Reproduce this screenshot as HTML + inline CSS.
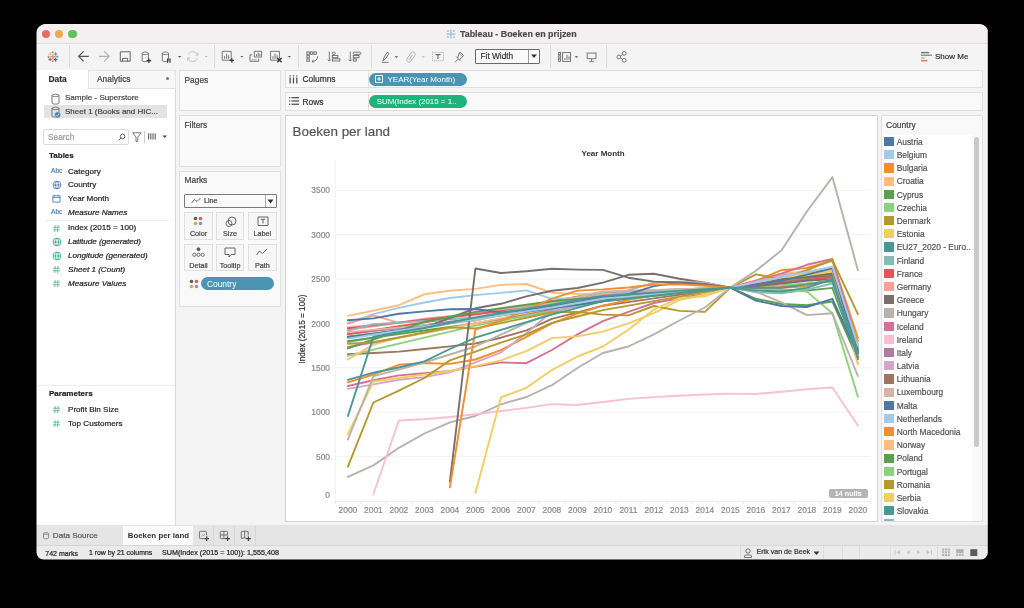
<!DOCTYPE html>
<html><head><meta charset="utf-8">
<style>
*{box-sizing:border-box;margin:0;padding:0}
html,body{width:1024px;height:608px;overflow:hidden;background:#000}
body{position:relative;font-family:"Liberation Sans",sans-serif;color:#333}
.a{position:absolute}
#win{position:absolute;left:36px;top:24px;width:953px;height:536px;border-radius:10px;overflow:hidden;background:#f4f4f4}
.t{position:absolute;white-space:nowrap;line-height:1}
.box{position:absolute;background:#f9f9f9;border:1px solid #e0e0e0}
.sw{position:absolute;left:884px;width:9.5px;height:9.3px}
.lt{position:absolute;left:896.7px;font-size:8.4px;color:#555;white-space:nowrap;line-height:12px}
.yl{position:absolute;left:296px;width:34px;text-align:right;font-size:8.4px;color:#8a8a8a;line-height:11px}
.xl{position:absolute;top:504.5px;width:30px;text-align:center;font-size:8.4px;color:#8a8a8a;line-height:11px}
.fld{position:absolute;left:68px;font-size:8.1px;color:#222;white-space:nowrap;line-height:12px}
.fi{position:absolute;left:51px}
svg{position:absolute;overflow:visible}
#root{position:absolute;left:0;top:0;width:1024px;height:608px;will-change:transform}
.t,.lt,.fld,.yl,.xl{-webkit-text-stroke:0.2px currentColor}
</style></head><body><div id="root">
<div id="win">
  <!-- title bar -->
  <div class="a" style="left:0;top:0;width:953px;height:20px;background:#f4f0f1;border-bottom:1px solid #e0dddf"></div>
</div>
<!-- traffic lights -->
<div class="a" style="left:42px;top:30px;width:8.4px;height:8.4px;border-radius:50%;background:#ec6b5f"></div>
<div class="a" style="left:55.1px;top:30px;width:8.4px;height:8.4px;border-radius:50%;background:#f3a64c"></div>
<div class="a" style="left:68.3px;top:30px;width:8.4px;height:8.4px;border-radius:50%;background:#5fc454"></div>
<!-- title -->
<svg style="left:446px;top:29px" width="10" height="10" viewBox="0 0 10 10"><g fill="#9cc3e0"><rect x="4.3" y="0.5" width="1.4" height="9"/><rect x="0.5" y="4.3" width="9" height="1.4"/><circle cx="2" cy="2" r="1"/><circle cx="8" cy="2" r="1"/><circle cx="2" cy="8" r="1"/><circle cx="8" cy="8" r="1"/></g></svg>
<div class="t" style="left:460px;top:29.8px;font-size:8.9px;font-weight:bold;color:#4b4b4b">Tableau - Boeken en prijzen</div>

<!-- toolbar icons -->
<svg style="left:0;top:0" width="1024" height="608"><g fill="none"><path d="M50.30 56.80H55.50M52.90 54.20V59.40" stroke="#f0954a" stroke-width="1.40"/><path d="M48.40 54.00H51.60M50.00 52.40V55.60" stroke="#f7b27a" stroke-width="1.20"/><path d="M51.60 52.40H53.80M52.70 51.30V53.50" stroke="#5aa89a" stroke-width="0.90"/><path d="M53.90 54.00H57.30M55.60 52.30V55.70" stroke="#5b8fc4" stroke-width="1.00"/><path d="M47.50 56.90H49.70M48.60 55.80V58.00" stroke="#5aa89a" stroke-width="0.90"/><path d="M56.10 56.70H58.50M57.30 55.50V57.90" stroke="#6b96c8" stroke-width="0.90"/><path d="M48.40 59.40H51.80M50.10 57.70V61.10" stroke="#e05060" stroke-width="1.20"/><path d="M51.60 61.10H53.80M52.70 60.00V62.20" stroke="#7aa2d0" stroke-width="0.90"/><path d="M53.80 59.60H57.40M55.60 57.80V61.40" stroke="#3a6aa8" stroke-width="1.20"/></g></svg>
<div class="a" style="left:68.5px;top:45.3px;width:1px;height:23px;background:#dcdcdc"></div>
<svg style="left:0;top:0" width="1024" height="608"><g fill="none" stroke="#6a6a6a" stroke-width="0.9">
 <path d="M78.8 56.3H88.8M83.6 51.3L78.6 56.3L83.6 61.3" stroke="#555" stroke-width="1.2"/>
 <path d="M99 56.3H109M104.2 51.3L109.2 56.3L104.2 61.3" stroke="#b0b0b0" stroke-width="1.2"/>
 <path d="M120.3 51.8H130.2V61.2H120.3Z M122.6 61.2V58.4H127.6V61.2" stroke="#555"/>
 <path d="M142.2 53.4C142.2 51.6 148.4 51.6 148.4 53.4V60.6C148.4 62 142.2 62 142.2 60.6Z M142.2 53.4C142.2 55 148.4 55 148.4 53.4"/>
 <path d="M146.6 60.6H151.2M148.9 58.4V62.9" stroke="#333" stroke-width="1.2"/>
 <path d="M162.3 53.4C162.3 51.6 168.5 51.6 168.5 53.4V60.6C168.5 62 162.3 62 162.3 60.6Z M162.3 53.4C162.3 55 168.5 55 168.5 53.4"/>
 <path d="M167.6 58.5V62.8M170 58.5V62.8" stroke="#333" stroke-width="1.2"/>
 <path d="M178 56L179.7 57.8L181.4 56Z" fill="#555" stroke="none"/>
 <path d="M188 54.5A5.3 5.3 0 0 1 197.6 54.8M197.6 58.5A5.3 5.3 0 0 1 187.8 58.3 M197.9 52.6V55.2H195.3 M187.5 60.5V58H190.1" stroke="#bdbdbd"/>
 <path d="M204.8 56L206.3 57.6L207.8 56Z" fill="#bbb" stroke="none"/>
</g></svg>
<div class="a" style="left:214px;top:45.3px;width:1px;height:23px;background:#dcdcdc"></div>
<svg style="left:0;top:0" width="1024" height="608"><g fill="none" stroke="#6a6a6a" stroke-width="0.9">
 <path d="M222.2 51.3H231.2V60.2H222.2Z M224.6 58.8V56.2M226.6 58.8V53.6M228.6 58.8V55.2"/>
 <path d="M229.6 60.4H234M231.8 58.2V62.6" stroke="#333" stroke-width="1.3"/>
 <path d="M240.4 56L241.9 57.6L243.4 56Z" fill="#555" stroke="none"/>
 <path d="M254.3 51.3H261.6V57H254.3Z M256.5 56V54.2M258.2 56V52.6M259.9 56V53.8"/>
 <path d="M252.2 54.9H250V61.3H258.7V58.5" />
 <path d="M251.8 59.8H256.8" stroke-dasharray="1 0.8"/>
 <path d="M270.6 51.3H279.4V60.2H270.6Z M273 58.8V56.2M275 58.8V53.6M277 58.8V55.2"/>
 <path d="M277.3 58L281.6 62.3M281.6 58L277.3 62.3" stroke="#333" stroke-width="1.3"/>
 <path d="M287.7 56L289.4 57.6L291.1 56Z" fill="#555" stroke="none"/>
</g></svg>
<div class="a" style="left:298.0px;top:45.3px;width:1px;height:23px;background:#dcdcdc"></div>
<svg style="left:0;top:0" width="1024" height="608"><g fill="none" stroke="#6a6a6a" stroke-width="0.9">
 <rect x="306.9" y="51.9" width="2.4" height="2.4"/><rect x="310.4" y="51.9" width="2.4" height="2.4"/><rect x="313.9" y="51.9" width="2.4" height="2.4"/>
 <rect x="306.9" y="55.4" width="2.4" height="2.4"/><rect x="306.9" y="58.9" width="2.4" height="2.4"/>
 <path d="M317.6 56.3C317.6 59.5 315.5 61.2 312.2 61.4"/><path d="M313.6 60.2L311.9 61.4L313.6 62.6"/>
 <path d="M329.3 51.6V61M327.9 59.6L329.3 61.2L330.7 59.6"/>
 <rect x="332.3" y="52.2" width="3" height="2.2" rx="1"/><rect x="332.3" y="55.5" width="5.6" height="2.2"/><rect x="332.3" y="58.8" width="7.6" height="2.2"/>
 <path d="M350.3 51.6V61M348.9 59.6L350.3 61.2L351.7 59.6"/>
 <rect x="353.3" y="52.2" width="7.6" height="2.2" rx="1"/><rect x="353.3" y="55.5" width="5.6" height="2.2"/><rect x="353.3" y="58.8" width="3" height="2.2"/>
</g></svg>
<div class="a" style="left:370.5px;top:45.3px;width:1px;height:23px;background:#dcdcdc"></div>
<svg style="left:0;top:0" width="1024" height="608"><g fill="none" stroke="#6a6a6a" stroke-width="0.9">
 <path d="M382.8 61L384.2 57.3L387.2 52.2L388.9 53.3L385.9 58.4L382.8 61Z M381.8 62.4H388.6"/>
 <path d="M394.5 56.3L396.3 58.1L398.1 56.3Z" fill="#555" stroke="none"/>
 <g transform="rotate(35 411 57)" stroke="#b0b0b0"><rect x="408.7" y="51.3" width="4.6" height="11.4" rx="2.3"/><path d="M411 54.2V60.5"/></g>
 <path d="M421.3 56.3L423.1 58.1L424.9 56.3Z" fill="#bbb" stroke="none"/>
 <rect x="432.5" y="52.4" width="11" height="8.2" stroke="#9a9a9a" stroke-dasharray="0.9 1.1"/>
 <path d="M435.6 54.6H440.4M438 54.6V59" stroke="#6a6a6a" stroke-width="1.1"/>
 <path d="M455 62.3L458 59.2 M456.2 56.6L460.6 61 M457.6 58L459.2 53 L462.8 56.6 L459.6 59.4 M459.2 53L460.2 52.2 L463.6 55.6L462.8 56.6"/>
</g></svg>
<div class="a" style="left:475px;top:49px;width:65px;height:15px;border:1px solid #6a6a6a;background:#fafafa;border-radius:1px"></div>
<div class="a" style="left:527.5px;top:50px;width:1px;height:13px;background:#9a9a9a"></div>
<div class="t" style="left:480.5px;top:52.3px;font-size:8.3px;color:#333">Fit Width</div>
<svg style="left:530px;top:53px" width="8" height="6"><path d="M1 1.5H7L4 5Z" fill="#333"/></svg>
<div class="a" style="left:549.5px;top:45.3px;width:1px;height:23px;background:#dcdcdc"></div>
<svg style="left:0;top:0" width="1024" height="608"><g fill="none" stroke="#6a6a6a" stroke-width="0.9">
 <rect x="558.6" y="52.6" width="2" height="2.2"/><rect x="558.6" y="55.8" width="2" height="2.2"/><rect x="558.6" y="59" width="2" height="2.2"/>
 <rect x="562.6" y="52.6" width="8" height="8.8"/><path d="M564.9 60V58M567 60V55M569 60V56.5"/>
 <path d="M586.2 53.1H597M587.2 53.6V58.7H596V53.6M591.6 58.7V61.6M589.2 61.7H594"/>
 <circle cx="618.9" cy="57" r="1.9"/><circle cx="624.2" cy="53.4" r="1.9"/><circle cx="624.2" cy="60.3" r="1.9"/><path d="M620.6 56L622.5 54.5M620.6 58L622.5 59.3"/>
</g><path d="M574.6 56.3L576.4 58.1L578.2 56.3Z" fill="#555"/></svg>
<div class="a" style="left:606.0px;top:45.3px;width:1px;height:23px;background:#dcdcdc"></div>

<!-- show me -->
<svg style="left:921px;top:51px" width="13" height="12" viewBox="0 0 13 12"><rect x="0" y="0.9" width="8.2" height="1.5" fill="#7a7a7a"/><rect x="0" y="3.5" width="11" height="1.5" fill="#6b9bd1"/><rect x="0" y="6.3" width="4" height="1.5" fill="#f2b36e"/><rect x="0" y="8.9" width="6.5" height="1.5" fill="#e8737a"/></svg>
<div class="t" style="left:935px;top:52.8px;font-size:8.0px;color:#333">Show Me</div>

<!-- LEFT PANEL -->
<div class="a" style="left:36px;top:70px;width:140px;height:455px;background:#fff;border-right:1px solid #d9d9d9"></div>
<div class="a" style="left:88px;top:70.3px;width:88px;height:19px;background:#f7f7f7;border:1px solid #e3e3e3"></div>
<div class="t" style="left:48.5px;top:74.5px;font-size:8.4px;font-weight:bold;color:#333">Data</div>
<div class="t" style="left:97px;top:74.5px;font-size:8.4px;color:#444">Analytics</div>
<div class="a" style="left:166px;top:77px;width:3px;height:3px;border-radius:50%;background:#777"></div>
<svg style="left:51px;top:92.5px" width="9" height="12" viewBox="0 0 9 12" fill="none" stroke="#666" stroke-width="0.9"><path d="M1 2.5C1 0.8 8 0.8 8 2.5V10C8 11.5 1 11.5 1 10Z M1 2.5C1 4 8 4 8 2.5"/></svg>
<div class="t" style="left:65px;top:93.5px;font-size:8.05px;color:#444">Sample - Superstore</div>
<div class="a" style="left:44px;top:105px;width:123.4px;height:13px;background:#e3e3e3"></div>
<svg style="left:51px;top:105.5px" width="11" height="13" viewBox="0 0 11 13" fill="none" stroke="#666" stroke-width="0.9"><path d="M1 2.5C1 0.8 8 0.8 8 2.5V10C8 11.5 1 11.5 1 10Z M1 2.5C1 4 8 4 8 2.5"/><circle cx="6.6" cy="8.9" r="3.1" fill="#3a86c4" stroke="#e3e3e3" stroke-width="0.6"/><path d="M5.2 9L6.3 10.1L8.2 7.8" stroke="#fff" stroke-width="0.7"/></svg>
<div class="t" style="left:65px;top:107.9px;font-size:8.0px;color:#444">Sheet 1 (Books and HIC...</div>

<div class="a" style="left:42.5px;top:129.2px;width:86.5px;height:15.5px;border:1px solid #dcdcdc;background:#fff;border-radius:2px"></div>
<div class="t" style="left:48px;top:133px;font-size:8.3px;color:#9a9a9a">Search</div>
<svg style="left:118px;top:133px" width="8" height="8" viewBox="0 0 8 8" fill="none" stroke="#555" stroke-width="0.9"><circle cx="4.6" cy="3.4" r="2.3"/><path d="M3 5L0.8 7.2"/></svg>
<svg style="left:131.5px;top:131.5px" width="10" height="10" viewBox="0 0 10 10" fill="none" stroke="#555" stroke-width="0.8"><path d="M0.6 0.8H9.2L5.8 5V9.4H4V5Z"/></svg>
<div class="a" style="left:143.5px;top:131px;width:1px;height:12px;background:#ccc"></div>
<svg style="left:147.7px;top:133px" width="20" height="9" viewBox="0 0 20 9"><g fill="#707070"><rect x="0" y="0.3" width="1.2" height="6.2"/><rect x="2.2" y="0.3" width="1.2" height="6.2"/><rect x="4.4" y="0.3" width="1.2" height="6.2"/><rect x="6.6" y="0.3" width="1.2" height="6.2"/><path d="M14.5 2.6H19L16.75 5Z" fill="#444"/></g></svg>

<div class="t" style="left:49px;top:152.3px;font-size:8.0px;font-weight:bold;color:#222">Tables</div>
<!-- field icons -->
<div class="t" style="left:51px;top:167.8px;font-size:6.6px;color:#4f81b3">Abc</div>
<svg style="left:51.5px;top:180px" width="10" height="10" viewBox="0 0 10 10" fill="none" stroke="#4f81b3" stroke-width="0.9"><circle cx="5" cy="5" r="3.9"/><path d="M1.1 5H8.9M5 1.1C3 3 3 7 5 8.9M5 1.1C7 3 7 7 5 8.9"/></svg>
<svg style="left:52px;top:194px" width="9" height="9" viewBox="0 0 10 10" fill="none" stroke="#4f81b3" stroke-width="1"><path d="M1 2H9V9H1Z M1 4H9M3 0.8V2.5M7 0.8V2.5"/></svg>
<div class="t" style="left:51px;top:209px;font-size:6.6px;color:#4f81b3">Abc</div>
<div class="a" style="left:45px;top:220px;width:124px;height:1px;background:#ececec"></div>
<svg style="left:52px;top:223.5px" width="9" height="9" viewBox="0 0 9 9" fill="none" stroke="#52b596" stroke-width="0.8"><path d="M3.2 1L2.8 8M6 1L5.6 8M1 3.2H8M1 5.8H8"/></svg>
<svg style="left:51.5px;top:236.5px" width="10" height="10" viewBox="0 0 10 10" fill="none" stroke="#3fae8a" stroke-width="0.9"><circle cx="5" cy="5" r="3.9"/><path d="M1.1 5H8.9M5 1.1C3 3 3 7 5 8.9M5 1.1C7 3 7 7 5 8.9"/></svg>
<svg style="left:51.5px;top:250.5px" width="10" height="10" viewBox="0 0 10 10" fill="none" stroke="#3fae8a" stroke-width="0.9"><circle cx="5" cy="5" r="3.9"/><path d="M1.1 5H8.9M5 1.1C3 3 3 7 5 8.9M5 1.1C7 3 7 7 5 8.9"/></svg>
<svg style="left:52px;top:264.5px" width="9" height="9" viewBox="0 0 9 9" fill="none" stroke="#52b596" stroke-width="0.8"><path d="M3.2 1L2.8 8M6 1L5.6 8M1 3.2H8M1 5.8H8"/></svg>
<svg style="left:52px;top:278.5px" width="9" height="9" viewBox="0 0 9 9" fill="none" stroke="#52b596" stroke-width="0.8"><path d="M3.2 1L2.8 8M6 1L5.6 8M1 3.2H8M1 5.8H8"/></svg>
<div class="fld" style="top:165.7px">Category</div>
<div class="fld" style="top:179.3px">Country</div>
<div class="fld" style="top:193.1px">Year Month</div>
<div class="fld" style="top:206.9px;font-style:italic">Measure Names</div>
<div class="fld" style="top:222.1px">Index (2015 = 100)</div>
<div class="fld" style="top:236.0px;font-style:italic">Latitude (generated)</div>
<div class="fld" style="top:250.0px;font-style:italic">Longitude (generated)</div>
<div class="fld" style="top:263.6px;font-style:italic">Sheet 1 (Count)</div>
<div class="fld" style="top:277.7px;font-style:italic">Measure Values</div>

<div class="a" style="left:37px;top:385px;width:138px;height:1px;background:#ececec"></div>
<div class="t" style="left:49px;top:390.3px;font-size:8.0px;font-weight:bold;color:#222">Parameters</div>
<svg style="left:52px;top:404.5px" width="9" height="9" viewBox="0 0 9 9" fill="none" stroke="#52b596" stroke-width="0.8"><path d="M3.2 1L2.8 8M6 1L5.6 8M1 3.2H8M1 5.8H8"/></svg>
<svg style="left:52px;top:418.5px" width="9" height="9" viewBox="0 0 9 9" fill="none" stroke="#52b596" stroke-width="0.8"><path d="M3.2 1L2.8 8M6 1L5.6 8M1 3.2H8M1 5.8H8"/></svg>
<div class="fld" style="top:403.5px">Profit Bin Size</div>
<div class="fld" style="top:417.7px">Top Customers</div>

<!-- MIDDLE COLUMN -->
<div class="box" style="left:179px;top:70px;width:102px;height:41px"></div>
<div class="t" style="left:184.5px;top:76px;font-size:8.4px;color:#444">Pages</div>
<div class="box" style="left:179px;top:115px;width:102px;height:51.5px"></div>
<div class="t" style="left:184.5px;top:120.5px;font-size:8.4px;color:#444">Filters</div>
<div class="box" style="left:179px;top:170.5px;width:102px;height:136px"></div>
<div class="t" style="left:184.5px;top:176px;font-size:8.4px;color:#444">Marks</div>
<div class="a" style="left:184px;top:194.2px;width:92.6px;height:13.8px;border:1px solid #7a7a7a;background:#fafafa;border-radius:1px"></div>
<div class="a" style="left:264.5px;top:195px;width:1px;height:12px;background:#aaa"></div>
<svg style="left:191px;top:197px" width="10" height="7" viewBox="0 0 10 7" fill="none" stroke="#555" stroke-width="0.9"><path d="M0.5 6L3.5 2.5L6 4.5L9.5 1"/></svg>
<div class="t" style="left:204px;top:197.3px;font-size:7.2px;color:#444">Line</div>
<svg style="left:267px;top:199px" width="7" height="5"><path d="M0.5 0.5H6.5L3.5 4.5Z" fill="#333"/></svg>
<!-- mark buttons -->
<div class="a" style="left:184px;top:212px;width:28.5px;height:27.5px;border:1px solid #e0e0e0;background:#f7f7f7"></div>
<div class="a" style="left:216.3px;top:212px;width:27.5px;height:27.5px;border:1px solid #e0e0e0;background:#f7f7f7"></div>
<div class="a" style="left:248px;top:212px;width:28.6px;height:27.5px;border:1px solid #e0e0e0;background:#f7f7f7"></div>
<div class="a" style="left:184px;top:243.7px;width:28.5px;height:27.5px;border:1px solid #e0e0e0;background:#f7f7f7"></div>
<div class="a" style="left:216.3px;top:243.7px;width:27.5px;height:27.5px;border:1px solid #e0e0e0;background:#f7f7f7"></div>
<div class="a" style="left:248px;top:243.7px;width:28.6px;height:27.5px;border:1px solid #e0e0e0;background:#f7f7f7"></div>
<svg style="left:193px;top:216px" width="10" height="10" viewBox="0 0 10 10"><circle cx="2.5" cy="2.5" r="1.8" fill="#5f5f5f"/><circle cx="7.5" cy="2.5" r="1.8" fill="#e05c5c"/><circle cx="2.5" cy="7.5" r="1.8" fill="#f29d4b"/><circle cx="7.5" cy="7.5" r="1.8" fill="#6f9fd8"/></svg>
<div class="t" style="left:184.5px;width:28px;text-align:center;top:229.5px;font-size:7.2px;color:#444">Color</div>
<svg style="left:224.5px;top:215.5px" width="12" height="12" viewBox="0 0 12 12" fill="none" stroke="#555" stroke-width="0.9"><circle cx="4" cy="7.5" r="3"/><circle cx="7" cy="5" r="4"/></svg>
<div class="t" style="left:216.3px;width:27.5px;text-align:center;top:229.5px;font-size:7.2px;color:#444">Size</div>
<svg style="left:256.5px;top:215.5px" width="12" height="11" viewBox="0 0 12 11" fill="none" stroke="#555" stroke-width="0.9"><path d="M1 1H11V9.5H1Z M3.8 3.3H8.2M6 3.3V7.5"/></svg>
<div class="t" style="left:248px;width:28.6px;text-align:center;top:229.5px;font-size:7.2px;color:#444">Label</div>
<svg style="left:192px;top:247px" width="13" height="11" viewBox="0 0 13 11" fill="none" stroke="#555" stroke-width="0.8"><circle cx="6.5" cy="2.2" r="1.5" fill="#555"/><circle cx="2.3" cy="7.8" r="1.6"/><circle cx="6.5" cy="7.8" r="1.6"/><circle cx="10.7" cy="7.8" r="1.6"/></svg>
<div class="t" style="left:184.5px;width:28px;text-align:center;top:261.8px;font-size:7.2px;color:#444">Detail</div>
<svg style="left:224px;top:247px" width="12" height="11" viewBox="0 0 12 11" fill="none" stroke="#555" stroke-width="0.9"><path d="M1 1H11V7.5H7L5 10V7.5H1Z"/></svg>
<div class="t" style="left:216.3px;width:27.5px;text-align:center;top:261.8px;font-size:7.2px;color:#444">Tooltip</div>
<svg style="left:256px;top:248px" width="12" height="8" viewBox="0 0 12 8" fill="none" stroke="#555" stroke-width="0.9"><path d="M0.5 7L3.5 3L6.5 5.5L11 1"/></svg>
<div class="t" style="left:248px;width:28.6px;text-align:center;top:261.8px;font-size:7.2px;color:#444">Path</div>
<svg style="left:188.5px;top:278.5px" width="10" height="10" viewBox="0 0 10 10"><circle cx="2.5" cy="2.5" r="1.8" fill="#5f5f5f"/><circle cx="7.5" cy="2.5" r="1.8" fill="#e05c5c"/><circle cx="2.5" cy="7.5" r="1.8" fill="#f29d4b"/><circle cx="7.5" cy="7.5" r="1.8" fill="#6f9fd8"/></svg>
<div class="a" style="left:200.8px;top:277px;width:73.2px;height:13.3px;border-radius:7px;background:#4b95b3"></div>
<div class="t" style="left:207px;top:279.5px;font-size:8.4px;color:#fff;-webkit-text-stroke:0">Country</div>

<!-- SHELVES -->
<div class="box" style="left:285px;top:70px;width:698px;height:18.3px"></div>
<div class="a" style="left:367.5px;top:71px;width:1px;height:16.3px;background:#e0e0e0"></div>
<svg style="left:289px;top:74.5px" width="9" height="9" viewBox="0 0 9 9" fill="#555"><rect x="0.5" y="2.5" width="1.3" height="6"/><rect x="3.8" y="2.5" width="1.3" height="6"/><rect x="7.1" y="2.5" width="1.3" height="6"/><rect x="0.5" y="0.3" width="1.3" height="1.2"/><rect x="3.8" y="0.3" width="1.3" height="1.2"/><rect x="7.1" y="0.3" width="1.3" height="1.2"/></svg>
<div class="t" style="left:302.5px;top:75px;font-size:8.4px;color:#333">Columns</div>
<div class="a" style="left:369px;top:72.5px;width:98px;height:13.3px;border-radius:7px;background:#4b95b3"></div>
<svg style="left:375px;top:75px" width="8" height="8" viewBox="0 0 8 8" fill="none" stroke="#fff" stroke-width="0.9"><path d="M0.5 0.5H7.5V7.5H0.5Z M2 4H6M4 2V6" stroke-width="0.9"/></svg>
<div class="t" style="left:387.5px;top:75.6px;font-size:8.0px;color:#fff;-webkit-text-stroke:0">YEAR(Year Month)</div>
<div class="box" style="left:285px;top:92.3px;width:698px;height:18.3px"></div>
<div class="a" style="left:367.5px;top:93.3px;width:1px;height:16.3px;background:#e0e0e0"></div>
<svg style="left:289px;top:97px" width="10" height="8" viewBox="0 0 10 8" fill="#555"><rect x="0" y="0" width="1.3" height="1.3"/><rect x="2.5" y="0" width="7.5" height="1.3"/><rect x="0" y="3.3" width="1.3" height="1.3"/><rect x="2.5" y="3.3" width="7.5" height="1.3"/><rect x="0" y="6.6" width="1.3" height="1.3"/><rect x="2.5" y="6.6" width="7.5" height="1.3"/></svg>
<div class="t" style="left:302.5px;top:97.5px;font-size:8.4px;color:#333">Rows</div>
<div class="a" style="left:369px;top:94.8px;width:98px;height:13.6px;border-radius:7px;background:#1db37c"></div>
<div class="t" style="left:376.8px;top:97.8px;font-size:7.9px;color:#fff;-webkit-text-stroke:0">SUM(Index (2015 = 1..</div>

<!-- CHART PANE -->
<div class="a" style="left:285px;top:115px;width:593px;height:406.5px;background:#fff;border:1px solid #d3d3d3"></div>
<div class="t" style="left:292.5px;top:125px;font-size:13.4px;color:#555">Boeken per land</div>
<div class="t" style="left:581.5px;top:149.8px;font-size:8px;font-weight:bold;color:#333;-webkit-text-stroke:0">Year Month</div>
<div class="t" style="left:302.7px;top:329.4px;font-size:8.2px;color:#333;transform:translate(-50%,-50%) rotate(-90deg);transform-origin:center">Index (2015 = 100)</div>
<svg style="left:0;top:0" width="1024" height="608">
 <line x1="336" y1="456.6" x2="871" y2="456.6" stroke="#f3f3f3" stroke-width="1"/>
<line x1="336" y1="412.2" x2="871" y2="412.2" stroke="#f3f3f3" stroke-width="1"/>
<line x1="336" y1="367.8" x2="871" y2="367.8" stroke="#f3f3f3" stroke-width="1"/>
<line x1="336" y1="323.4" x2="871" y2="323.4" stroke="#f3f3f3" stroke-width="1"/>
<line x1="336" y1="279.1" x2="871" y2="279.1" stroke="#f3f3f3" stroke-width="1"/>
<line x1="336" y1="234.7" x2="871" y2="234.7" stroke="#f3f3f3" stroke-width="1"/>
<line x1="336" y1="190.3" x2="871" y2="190.3" stroke="#f3f3f3" stroke-width="1"/>
<line x1="335.3" y1="501" x2="335.3" y2="504" stroke="#e6e6e6" stroke-width="1"/>
<line x1="360.8" y1="501" x2="360.8" y2="504" stroke="#e6e6e6" stroke-width="1"/>
<line x1="386.3" y1="501" x2="386.3" y2="504" stroke="#e6e6e6" stroke-width="1"/>
<line x1="411.8" y1="501" x2="411.8" y2="504" stroke="#e6e6e6" stroke-width="1"/>
<line x1="437.3" y1="501" x2="437.3" y2="504" stroke="#e6e6e6" stroke-width="1"/>
<line x1="462.8" y1="501" x2="462.8" y2="504" stroke="#e6e6e6" stroke-width="1"/>
<line x1="488.3" y1="501" x2="488.3" y2="504" stroke="#e6e6e6" stroke-width="1"/>
<line x1="513.8" y1="501" x2="513.8" y2="504" stroke="#e6e6e6" stroke-width="1"/>
<line x1="539.3" y1="501" x2="539.3" y2="504" stroke="#e6e6e6" stroke-width="1"/>
<line x1="564.8" y1="501" x2="564.8" y2="504" stroke="#e6e6e6" stroke-width="1"/>
<line x1="590.3" y1="501" x2="590.3" y2="504" stroke="#e6e6e6" stroke-width="1"/>
<line x1="615.8" y1="501" x2="615.8" y2="504" stroke="#e6e6e6" stroke-width="1"/>
<line x1="641.3" y1="501" x2="641.3" y2="504" stroke="#e6e6e6" stroke-width="1"/>
<line x1="666.8" y1="501" x2="666.8" y2="504" stroke="#e6e6e6" stroke-width="1"/>
<line x1="692.3" y1="501" x2="692.3" y2="504" stroke="#e6e6e6" stroke-width="1"/>
<line x1="717.8" y1="501" x2="717.8" y2="504" stroke="#e6e6e6" stroke-width="1"/>
<line x1="743.3" y1="501" x2="743.3" y2="504" stroke="#e6e6e6" stroke-width="1"/>
<line x1="768.8" y1="501" x2="768.8" y2="504" stroke="#e6e6e6" stroke-width="1"/>
<line x1="794.3" y1="501" x2="794.3" y2="504" stroke="#e6e6e6" stroke-width="1"/>
<line x1="819.8" y1="501" x2="819.8" y2="504" stroke="#e6e6e6" stroke-width="1"/>
<line x1="845.3" y1="501" x2="845.3" y2="504" stroke="#e6e6e6" stroke-width="1"/>
<line x1="870.8" y1="501" x2="870.8" y2="504" stroke="#e6e6e6" stroke-width="1"/>
 <line x1="335.3" y1="159.7" x2="335.3" y2="501" stroke="#f0f0f0" stroke-width="1"/>
 <line x1="335.3" y1="501.5" x2="871" y2="501.5" stroke="#ececec" stroke-width="1"/>
 <g fill="none" stroke-width="1.9" stroke-linejoin="round" stroke-linecap="round">
 <polyline points="347.9,334.1 373.4,331.1 398.9,328.2 424.4,325.2 449.9,321.7 475.4,318.1 500.9,314.6 526.4,310.1 551.9,305.7 577.4,301.2 602.9,296.8 628.4,295.0 653.9,293.1 679.4,291.3 704.9,289.4 730.4,287.6 755.9,283.3 781.4,279.1 806.9,276.4 832.4,273.7 857.9,351.8" stroke="#b07aa1"/>
<polyline points="347.9,342.1 373.4,337.5 398.9,332.9 424.4,328.2 449.9,323.6 475.4,319.0 500.9,314.0 526.4,309.1 551.9,304.1 577.4,299.1 602.9,294.1 628.4,292.8 653.9,291.5 679.4,290.2 704.9,288.9 730.4,287.6 755.9,284.6 781.4,281.7 806.9,278.6 832.4,275.5 857.9,355.4" stroke="#86bcb6"/>
<polyline points="347.9,334.1 373.4,330.2 398.9,326.3 424.4,322.4 449.9,318.5 475.4,314.6 500.9,310.1 526.4,305.7 551.9,301.2 577.4,296.8 602.9,292.4 628.4,291.4 653.9,290.4 679.4,289.5 704.9,288.5 730.4,287.6 755.9,287.3 781.4,287.0 806.9,283.9 832.4,280.8 857.9,348.3" stroke="#e15759"/>
<polyline points="347.9,329.7 373.4,326.3 398.9,322.9 424.4,319.5 449.9,316.2 475.4,312.8 500.9,309.9 526.4,307.1 551.9,304.3 577.4,301.4 602.9,298.6 628.4,296.4 653.9,294.2 679.4,292.0 704.9,289.8 730.4,287.6 755.9,282.4 781.4,277.3 806.9,273.7 832.4,270.2 857.9,344.7" stroke="#ff9d9a"/>
<polyline points="347.9,327.0 373.4,324.9 398.9,322.7 424.4,320.6 449.9,318.5 475.4,316.3 500.9,313.1 526.4,309.9 551.9,306.7 577.4,303.6 602.9,300.4 628.4,297.8 653.9,295.2 679.4,292.7 704.9,290.1 730.4,287.6 755.9,284.2 781.4,280.8 806.9,276.4 832.4,271.9 857.9,355.4" stroke="#fabfd2"/>
<polyline points="347.9,336.8 373.4,333.4 398.9,330.1 424.4,326.8 449.9,323.4 475.4,319.0 500.9,314.6 526.4,310.1 551.9,305.7 577.4,301.2 602.9,296.8 628.4,294.6 653.9,292.4 679.4,290.8 704.9,289.2 730.4,287.6 755.9,286.4 781.4,285.3 806.9,283.5 832.4,281.7 857.9,359.0" stroke="#8cd17d"/>
<polyline points="347.9,341.2 373.4,337.6 398.9,334.1 424.4,330.5 449.9,327.0 475.4,323.4 500.9,319.0 526.4,314.6 551.9,310.1 577.4,305.7 602.9,301.2 628.4,298.5 653.9,295.8 679.4,293.0 704.9,290.3 730.4,287.6 755.9,288.8 781.4,289.7 806.9,290.6 832.4,287.9 857.9,357.2" stroke="#59a14f"/>
<polyline points="347.9,315.9 373.4,310.6 398.9,305.2 424.4,294.3 449.9,290.7 475.4,288.9 500.9,284.9 526.4,284.0 551.9,292.7 577.4,294.1 602.9,293.3 628.4,292.4 653.9,291.5 679.4,290.2 704.9,288.9 730.4,287.6 755.9,284.4 781.4,277.3 806.9,273.7 832.4,270.2 857.9,364.3" stroke="#ffbe7d"/>
<polyline points="347.9,322.8 373.4,314.2 398.9,307.9 424.4,302.5 449.9,298.0 475.4,295.1 500.9,292.9 526.4,290.4 551.9,298.9 577.4,297.7 602.9,294.1 628.4,292.8 653.9,291.5 679.4,290.2 704.9,288.9 730.4,287.6 755.9,283.3 781.4,279.1 806.9,276.4 832.4,273.7 857.9,350.1" stroke="#a0cbe8"/>
<polyline points="347.9,323.8 373.4,315.4 398.9,322.8 424.4,318.8 449.9,316.2 475.4,313.7 500.9,309.8 526.4,306.0 551.9,302.1 577.4,298.6 602.9,295.0 628.4,293.5 653.9,292.0 679.4,290.6 704.9,289.1 730.4,287.6 755.9,283.8 781.4,279.9 806.9,277.7 832.4,275.5 857.9,350.1" stroke="#ff9d9a"/>
<polyline points="347.9,328.2 373.4,325.4 398.9,322.6 424.4,319.8 449.9,317.0 475.4,314.1 500.9,311.3 526.4,308.5 551.9,305.7 577.4,301.7 602.9,297.7 628.4,295.7 653.9,293.6 679.4,291.6 704.9,289.6 730.4,287.6 755.9,285.1 781.4,282.6 806.9,279.9 832.4,277.3 857.9,351.8" stroke="#e15759"/>
<polyline points="347.9,330.7 373.4,324.2 398.9,322.6 424.4,320.9 449.9,319.2 475.4,317.6 500.9,312.5 526.4,307.5 551.9,302.5 577.4,297.4 602.9,292.4 628.4,291.4 653.9,290.4 679.4,289.5 704.9,288.5 730.4,287.6 755.9,292.4 781.4,293.3 806.9,289.7 832.4,283.5 857.9,354.5" stroke="#86bcb6"/>
<polyline points="347.9,332.1 373.4,329.9 398.9,327.6 424.4,325.3 449.9,323.0 475.4,320.8 500.9,314.9 526.4,309.1 551.9,303.2 577.4,297.3 602.9,291.5 628.4,290.7 653.9,289.9 679.4,289.1 704.9,288.4 730.4,287.6 755.9,283.3 781.4,279.1 806.9,275.5 832.4,271.9 857.9,357.2" stroke="#d7b5a6"/>
<polyline points="347.9,336.8 373.4,333.7 398.9,330.7 424.4,327.7 449.9,318.0 475.4,308.3 500.9,303.8 526.4,296.4 551.9,290.8 577.4,288.0 602.9,282.6 628.4,274.8 653.9,273.8 679.4,278.7 704.9,282.6 730.4,287.6 755.9,286.2 781.4,283.5 806.9,280.8 832.4,279.1 857.9,357.2" stroke="#79706e"/>
<polyline points="347.9,347.0 373.4,342.3 398.9,337.6 424.4,332.9 449.9,328.1 475.4,323.4 500.9,318.8 526.4,314.2 551.9,309.6 577.4,305.0 602.9,300.4 628.4,297.8 653.9,295.2 679.4,292.7 704.9,290.1 730.4,287.6 755.9,281.5 781.4,275.5 806.9,272.8 832.4,270.2 857.9,350.1" stroke="#d37295"/>
<polyline points="347.9,348.4 373.4,339.5 398.9,330.7 424.4,321.8 449.9,316.9 475.4,311.9 500.9,308.3 526.4,304.8 551.9,301.2 577.4,299.0 602.9,296.8 628.4,295.0 653.9,293.1 679.4,291.3 704.9,289.4 730.4,287.6 755.9,298.8 781.4,304.0 806.9,305.2 832.4,301.5 857.9,359.0" stroke="#59a14f"/>
<polyline points="347.9,354.3 373.4,353.0 398.9,351.6 424.4,349.0 449.9,346.4 475.4,343.5 500.9,337.7 526.4,330.3 551.9,318.8 577.4,312.3 602.9,305.7 628.4,302.1 653.9,298.4 679.4,294.8 704.9,291.2 730.4,287.6 755.9,284.2 781.4,280.8 806.9,278.2 832.4,275.5 857.9,350.1" stroke="#9d7660"/>
<polyline points="347.9,355.8 373.4,349.7 398.9,343.7 424.4,337.6 449.9,331.6 475.4,325.6 500.9,320.7 526.4,315.8 551.9,311.0 577.4,306.1 602.9,301.2 628.4,298.5 653.9,295.8 679.4,293.0 704.9,290.3 730.4,287.6 755.9,288.7 781.4,289.8 806.9,291.6 832.4,313.3 857.9,396.7" stroke="#8cd17d"/>
<polyline points="347.9,359.5 373.4,344.6 398.9,337.6 424.4,333.1 449.9,327.9 475.4,323.4 500.9,318.1 526.4,312.8 551.9,307.5 577.4,302.1 602.9,296.8 628.4,295.0 653.9,293.1 679.4,291.3 704.9,289.4 730.4,287.6 755.9,280.6 781.4,273.7 806.9,271.1 832.4,268.4 857.9,363.4" stroke="#ffbe7d"/>
<polyline points="347.9,382.4 373.4,374.5 398.9,364.8 424.4,363.0 449.9,363.9 475.4,359.5 500.9,350.1 526.4,336.8 551.9,323.4 577.4,313.7 602.9,305.7 628.4,299.9 653.9,295.5 679.4,292.8 704.9,290.2 730.4,287.6 755.9,280.8 781.4,270.2 806.9,268.0 832.4,260.9 857.9,338.0" stroke="#f28e2b"/>
<polyline points="347.9,386.0 373.4,380.3 398.9,375.4 424.4,373.2 449.9,371.0 475.4,366.6 500.9,362.4 526.4,363.2 551.9,350.0 577.4,334.4 602.9,321.2 628.4,311.9 653.9,303.0 679.4,298.2 704.9,294.2 730.4,287.6 755.9,280.6 781.4,273.7 806.9,264.8 832.4,259.0 857.9,345.6" stroke="#d37295"/>
<polyline points="347.9,388.9 373.4,384.4 398.9,379.8 424.4,377.1 449.9,372.3 475.4,362.4 500.9,352.6 526.4,333.2 551.9,311.5 577.4,303.0 602.9,296.8 628.4,295.0 653.9,293.1 679.4,291.3 704.9,289.4 730.4,287.6 755.9,281.5 781.4,275.5 806.9,272.8 832.4,270.2 857.9,350.1" stroke="#d4a6c8"/>
<polyline points="347.9,434.1 373.4,381.5 398.9,378.0 424.4,374.5 449.9,371.0 475.4,366.1 500.9,360.4 526.4,351.1 551.9,338.1 577.4,336.3 602.9,331.6 628.4,323.3 653.9,313.1 679.4,300.0 704.9,294.5 730.4,287.6 755.9,283.3 781.4,279.1 806.9,275.5 832.4,271.9 857.9,359.0" stroke="#f1ce63"/>
<polyline points="347.9,439.5 373.4,376.2 398.9,369.6 424.4,362.5 449.9,354.5 475.4,346.5 500.9,334.7 526.4,322.9 551.9,313.0 577.4,305.4 602.9,297.9 628.4,290.4 653.9,282.6 679.4,281.6 704.9,282.6 730.4,287.6 755.9,291.6 781.4,302.4 806.9,315.1 832.4,313.3 857.9,376.0" stroke="#bab0ac"/>
<polyline points="347.9,466.6 373.4,402.5 398.9,390.7 424.4,378.0 449.9,360.4 475.4,351.6 500.9,342.6 526.4,334.4 551.9,322.9 577.4,316.5 602.9,310.1 628.4,305.6 653.9,301.1 679.4,296.6 704.9,292.1 730.4,287.6 755.9,284.2 781.4,280.8 806.9,277.3 832.4,273.7 857.9,350.1" stroke="#b6992d"/>
<polyline points="347.9,337.6 373.4,333.9 398.9,330.2 424.4,326.5 449.9,322.7 475.4,319.0 500.9,315.4 526.4,311.9 551.9,308.3 577.4,304.8 602.9,301.2 628.4,294.1 653.9,286.1 679.4,282.6 704.9,284.4 730.4,287.6 755.9,300.6 781.4,306.0 806.9,307.0 832.4,298.8 857.9,354.5" stroke="#4e79a7"/>
<polyline points="347.9,343.7 373.4,342.5 398.9,337.5 424.4,332.5 449.9,327.4 475.4,328.5 500.9,323.1 526.4,317.7 551.9,312.3 577.4,311.9 602.9,314.6 628.4,315.4 653.9,306.0 679.4,310.9 704.9,311.9 730.4,287.6 755.9,274.4 781.4,278.9 806.9,270.2 832.4,260.0 857.9,314.2" stroke="#b6992d"/>
<polyline points="347.9,476.8 373.4,465.4 398.9,447.8 424.4,433.5 449.9,422.4 475.4,416.0 500.9,404.3 526.4,397.0 551.9,385.2 577.4,368.0 602.9,353.0 628.4,346.5 653.9,334.4 679.4,320.5 704.9,307.5 730.4,287.6 755.9,270.8 781.4,250.4 806.9,211.5 832.4,177.1 857.9,270.2" stroke="#bab0ac"/>
<polyline points="373.4,494.0 398.9,420.5 424.4,419.2 449.9,417.0 475.4,414.2 500.9,411.0 526.4,407.9 551.9,404.1 577.4,405.0 602.9,402.0 628.4,398.9 653.9,397.1 679.4,395.8 704.9,394.5 730.4,393.6 755.9,394.0 781.4,391.8 806.9,389.3 832.4,387.5 857.9,425.5" stroke="#fabfd2"/>
<polyline points="449.9,481.7 475.4,268.5 500.9,273.0 526.4,271.3 551.9,268.8 577.4,269.6 602.9,269.9 628.4,277.7 653.9,281.6 679.4,282.5 704.9,284.3 730.4,287.6 755.9,282.6 781.4,279.1 806.9,277.3 832.4,273.7 857.9,350.1" stroke="#79706e"/>
<polyline points="449.9,487.4 475.4,329.7 500.9,320.8 526.4,310.1 551.9,298.6 577.4,290.6 602.9,289.4 628.4,287.5 653.9,284.5 679.4,284.4 704.9,285.7 730.4,287.6 755.9,287.9 781.4,287.9 806.9,286.2 832.4,279.1 857.9,341.2" stroke="#f28e2b"/>
<polyline points="475.4,493.0 500.9,397.5 526.4,387.8 551.9,370.0 577.4,356.7 602.9,346.5 628.4,329.8 653.9,309.4 679.4,298.2 704.9,296.4 730.4,287.6 755.9,282.4 781.4,277.3 806.9,273.7 832.4,270.2 857.9,354.5" stroke="#f1ce63"/>
<polyline points="347.9,320.3 373.4,318.4 398.9,313.7 424.4,311.4 449.9,309.2 475.4,309.0 500.9,312.4 526.4,310.1 551.9,306.6 577.4,301.7 602.9,296.8 628.4,295.5 653.9,294.1 679.4,292.4 704.9,290.6 730.4,287.6 755.9,284.2 781.4,280.8 806.9,274.6 832.4,268.4 857.9,353.6" stroke="#4e79a7"/>
<polyline points="347.9,338.6 373.4,334.7 398.9,330.7 424.4,326.7 449.9,323.0 475.4,319.3 500.9,315.3 526.4,311.4 551.9,307.5 577.4,303.0 602.9,298.6 628.4,296.4 653.9,294.2 679.4,292.0 704.9,289.8 730.4,287.6 755.9,282.4 781.4,277.3 806.9,271.9 832.4,266.6 857.9,345.6" stroke="#a0cbe8"/>
<polyline points="347.9,379.8 373.4,372.7 398.9,367.5 424.4,361.3 449.9,349.0 475.4,337.6 500.9,329.9 526.4,322.2 551.9,314.6 577.4,307.9 602.9,301.2 628.4,298.5 653.9,295.8 679.4,293.0 704.9,290.3 730.4,287.6 755.9,290.6 781.4,291.5 806.9,287.9 832.4,279.1 857.9,359.0" stroke="#499894"/>
<polyline points="347.9,416.0 373.4,336.7 398.9,332.3 424.4,327.9 449.9,322.7 475.4,317.6 500.9,313.2 526.4,308.9 551.9,304.6 577.4,300.3 602.9,295.9 628.4,294.2 653.9,292.6 679.4,290.9 704.9,289.2 730.4,287.6 755.9,287.8 781.4,287.9 806.9,284.4 832.4,280.8 857.9,351.8" stroke="#499894"/>
 </g>
</svg>
<div class="yl" style="top:490.4px">0</div>
<div class="yl" style="top:451.7px">500</div>
<div class="yl" style="top:407.3px">1000</div>
<div class="yl" style="top:362.9px">1500</div>
<div class="yl" style="top:318.5px">2000</div>
<div class="yl" style="top:274.2px">2500</div>
<div class="yl" style="top:229.8px">3000</div>
<div class="yl" style="top:185.4px">3500</div>
<div class="xl" style="left:332.9px">2000</div>
<div class="xl" style="left:358.4px">2001</div>
<div class="xl" style="left:383.9px">2002</div>
<div class="xl" style="left:409.4px">2003</div>
<div class="xl" style="left:434.9px">2004</div>
<div class="xl" style="left:460.4px">2005</div>
<div class="xl" style="left:485.9px">2006</div>
<div class="xl" style="left:511.4px">2007</div>
<div class="xl" style="left:536.9px">2008</div>
<div class="xl" style="left:562.4px">2009</div>
<div class="xl" style="left:587.9px">2010</div>
<div class="xl" style="left:613.4px">2011</div>
<div class="xl" style="left:638.9px">2012</div>
<div class="xl" style="left:664.4px">2013</div>
<div class="xl" style="left:689.9px">2014</div>
<div class="xl" style="left:715.4px">2015</div>
<div class="xl" style="left:740.9px">2016</div>
<div class="xl" style="left:766.4px">2017</div>
<div class="xl" style="left:791.9px">2018</div>
<div class="xl" style="left:817.4px">2019</div>
<div class="xl" style="left:842.9px">2020</div>
<div class="a" style="left:829px;top:488.6px;width:38.5px;height:9.2px;border-radius:2px;background:#b4b4b4"></div>
<div class="t" style="left:829px;width:38.5px;text-align:center;top:489.6px;font-size:7.2px;font-weight:bold;color:#fff;-webkit-text-stroke:0">14 nulls</div>

<!-- LEGEND -->
<div class="box" style="left:881px;top:115px;width:102px;height:406.5px"></div>
<div class="t" style="left:886px;top:121px;font-size:8.5px;color:#444">Country</div>
<div class="a" style="left:883px;top:134.5px;width:88.5px;height:386px;background:#fff"></div>
<div class="a" style="left:974px;top:136.5px;width:5px;height:310px;border-radius:3px;background:#c9c9c9"></div>
<div class="a" style="left:881px;top:135px;width:102px;height:386px;overflow:hidden">
<div class="a" style="left:-881px;top:-135px;width:1024px;height:608px">
<div class="sw" style="top:136.9px;background:#4e79a7"></div>
<div class="lt" style="top:135.8px">Austria</div>
<div class="sw" style="top:150.1px;background:#a0cbe8"></div>
<div class="lt" style="top:149.0px">Belgium</div>
<div class="sw" style="top:163.3px;background:#f28e2b"></div>
<div class="lt" style="top:162.2px">Bulgaria</div>
<div class="sw" style="top:176.5px;background:#ffbe7d"></div>
<div class="lt" style="top:175.4px">Croatia</div>
<div class="sw" style="top:189.7px;background:#59a14f"></div>
<div class="lt" style="top:188.6px">Cyprus</div>
<div class="sw" style="top:202.8px;background:#8cd17d"></div>
<div class="lt" style="top:201.8px">Czechia</div>
<div class="sw" style="top:216.0px;background:#b6992d"></div>
<div class="lt" style="top:214.9px">Denmark</div>
<div class="sw" style="top:229.2px;background:#f1ce63"></div>
<div class="lt" style="top:228.1px">Estonia</div>
<div class="sw" style="top:242.4px;background:#499894"></div>
<div class="lt" style="top:241.3px">EU27_2020 - Euro..</div>
<div class="sw" style="top:255.6px;background:#86bcb6"></div>
<div class="lt" style="top:254.5px">Finland</div>
<div class="sw" style="top:268.8px;background:#e15759"></div>
<div class="lt" style="top:267.7px">France</div>
<div class="sw" style="top:282.0px;background:#ff9d9a"></div>
<div class="lt" style="top:280.9px">Germany</div>
<div class="sw" style="top:295.2px;background:#79706e"></div>
<div class="lt" style="top:294.1px">Greece</div>
<div class="sw" style="top:308.4px;background:#bab0ac"></div>
<div class="lt" style="top:307.3px">Hungary</div>
<div class="sw" style="top:321.6px;background:#d37295"></div>
<div class="lt" style="top:320.5px">Iceland</div>
<div class="sw" style="top:334.8px;background:#fabfd2"></div>
<div class="lt" style="top:333.7px">Ireland</div>
<div class="sw" style="top:347.9px;background:#b07aa1"></div>
<div class="lt" style="top:346.8px">Italy</div>
<div class="sw" style="top:361.1px;background:#d4a6c8"></div>
<div class="lt" style="top:360.0px">Latvia</div>
<div class="sw" style="top:374.3px;background:#9d7660"></div>
<div class="lt" style="top:373.2px">Lithuania</div>
<div class="sw" style="top:387.5px;background:#d7b5a6"></div>
<div class="lt" style="top:386.4px">Luxembourg</div>
<div class="sw" style="top:400.7px;background:#4e79a7"></div>
<div class="lt" style="top:399.6px">Malta</div>
<div class="sw" style="top:413.9px;background:#a0cbe8"></div>
<div class="lt" style="top:412.8px">Netherlands</div>
<div class="sw" style="top:427.1px;background:#f28e2b"></div>
<div class="lt" style="top:426.0px">North Macedonia</div>
<div class="sw" style="top:440.3px;background:#ffbe7d"></div>
<div class="lt" style="top:439.2px">Norway</div>
<div class="sw" style="top:453.5px;background:#59a14f"></div>
<div class="lt" style="top:452.4px">Poland</div>
<div class="sw" style="top:466.6px;background:#8cd17d"></div>
<div class="lt" style="top:465.6px">Portugal</div>
<div class="sw" style="top:479.8px;background:#b6992d"></div>
<div class="lt" style="top:478.7px">Romania</div>
<div class="sw" style="top:493.0px;background:#f1ce63"></div>
<div class="lt" style="top:491.9px">Serbia</div>
<div class="sw" style="top:506.2px;background:#499894"></div>
<div class="lt" style="top:505.1px">Slovakia</div>
<div class="sw" style="top:519.4px;background:#86bcb6"></div>
</div></div>

<!-- TAB BAR -->
<div class="a" style="left:36px;top:525px;width:953px;height:20.5px;background:#e5e5e5"></div>
<svg style="left:43.3px;top:532px" width="6" height="7.5" viewBox="0 0 6 7.5" fill="none" stroke="#777" stroke-width="0.8"><path d="M0.5 1.5C0.5 0.4 5.5 0.4 5.5 1.5V6C5.5 7.1 0.5 7.1 0.5 6Z M0.5 1.5C0.5 2.6 5.5 2.6 5.5 1.5"/></svg>
<div class="t" style="left:52.8px;top:531.5px;font-size:8.1px;color:#555">Data Source</div>
<div class="a" style="left:123px;top:525.5px;width:69.5px;height:20px;background:#fbfbfb"></div>
<div class="t" style="left:127.7px;top:532.2px;font-size:7.9px;font-weight:bold;color:#333;-webkit-text-stroke:0">Boeken per land</div>
<div class="a" style="left:213px;top:526px;width:1px;height:19px;background:#d6d6d6"></div>
<div class="a" style="left:234px;top:526px;width:1px;height:19px;background:#d6d6d6"></div>
<div class="a" style="left:255.2px;top:526px;width:1px;height:19px;background:#d6d6d6"></div>
<svg style="left:0;top:0" width="1024" height="608"><g fill="none" stroke="#666" stroke-width="0.9">
 <path d="M204 538.6H200.3A0.9 0.9 0 0 1 199.4 537.7V532.2A0.9 0.9 0 0 1 200.3 531.3H205.7A0.9 0.9 0 0 1 206.6 532.2V535.5"/>
 <path d="M201.2 536.6L202.6 534.6L203.6 535.8L205 533.4" stroke-width="0.6" stroke="#888"/>
 <path d="M204.3 538.6H209M206.65 536.3V541" stroke="#444" stroke-width="1.3"/>
 <path d="M225 538.6H221.2A0.9 0.9 0 0 1 220.3 537.7V532.2A0.9 0.9 0 0 1 221.2 531.3H226.6A0.9 0.9 0 0 1 227.5 532.2V535.5 M223.9 531.3V538.6M220.3 535H227.5"/>
 <path d="M225.2 538.7H229.9M227.55 536.4V541.1" stroke="#444" stroke-width="1.3"/>
 <path d="M246 538.3L244.7 537.9L241.3 538.5V531.6L244.7 531L248.2 531.6V535.5 M244.7 531V537.9"/>
 <path d="M246.1 538.7H250.8M248.45 536.4V541.1" stroke="#444" stroke-width="1.3"/>
</g></svg>

<!-- STATUS BAR -->
<div class="a" style="left:36px;top:544.8px;width:953px;height:15.2px;background:#ebebeb;border-top:1px solid #d6d6d6"></div>
<div class="t" style="left:45.3px;top:549.6px;font-size:7px;color:#222">742 marks</div>
<div class="t" style="left:89px;top:549.6px;font-size:6.9px;color:#222">1 row by 21 columns</div>
<div class="t" style="left:162px;top:549.5px;font-size:7.18px;color:#222">SUM(Index (2015 = 100)): 1,555,408</div>
<div class="a" style="left:739.5px;top:546px;width:1px;height:13px;background:#dcdcdc"></div>
<div class="a" style="left:823px;top:546px;width:1px;height:13px;background:#dcdcdc"></div>
<div class="a" style="left:841.5px;top:546px;width:1px;height:13px;background:#dcdcdc"></div>
<div class="a" style="left:858.8px;top:546px;width:1px;height:13px;background:#dcdcdc"></div>
<div class="a" style="left:889.9px;top:546px;width:1px;height:13px;background:#dcdcdc"></div>
<div class="a" style="left:936.5px;top:546px;width:1px;height:13px;background:#dcdcdc"></div>
<svg style="left:743.5px;top:547.5px" width="8" height="10" viewBox="0 0 8 10" fill="none" stroke="#555" stroke-width="0.8"><circle cx="4" cy="3" r="2.2"/><path d="M0.5 9.5V8C0.5 6.5 7.5 6.5 7.5 8V9.5Z"/></svg>
<div class="t" style="left:756.5px;top:549.3px;font-size:7.1px;color:#333">Erik van de Beek</div>
<svg style="left:812.5px;top:550.5px" width="7" height="5"><path d="M0.5 0.5H6.5L3.5 4Z" fill="#333"/></svg>
<svg style="left:0;top:0" width="1024" height="608">
 <g fill="#c4c4c4"><rect x="894.8" y="550" width="0.9" height="4.6"/><path d="M900 550L896.5 552.3L900 554.6Z"/><path d="M909.6 550L906.6 552.3L909.6 554.6Z"/><path d="M917 550L920 552.3L917 554.6Z"/><path d="M926.6 550L930 552.3L926.6 554.6Z"/><rect x="930.9" y="550" width="0.9" height="4.6"/></g>
 <g fill="#b0b0b0"><rect x="942.2" y="548.5" width="2" height="2"/><rect x="945" y="548.5" width="2" height="2"/><rect x="947.8" y="548.5" width="2" height="2"/><rect x="942.2" y="551.3" width="2" height="2"/><rect x="945" y="551.3" width="2" height="2"/><rect x="947.8" y="551.3" width="2" height="2"/><rect x="942.2" y="554.1" width="2" height="2"/><rect x="945" y="554.1" width="2" height="2"/><rect x="947.8" y="554.1" width="2" height="2"/>
 <rect x="956.2" y="549.2" width="7.4" height="4"/><rect x="956.2" y="554" width="2" height="1.9"/><rect x="958.9" y="554" width="2" height="1.9"/><rect x="961.6" y="554" width="2" height="1.9"/></g>
 <rect x="970.3" y="549.2" width="7" height="6.8" fill="#5c5c5c"/>
</svg>
<svg style="left:0;top:0" width="1024" height="608"><path fill="#000" fill-rule="evenodd" d="M0 0H1024V608H0Z M43.5 24.1H980.8A7 7 0 0 1 987.8 31.1V552.6A7 7 0 0 1 980.8 559.6H43.5A7 7 0 0 1 36.5 552.6V31.1A7 7 0 0 1 43.5 24.1Z"/></svg>
</div></body></html>
